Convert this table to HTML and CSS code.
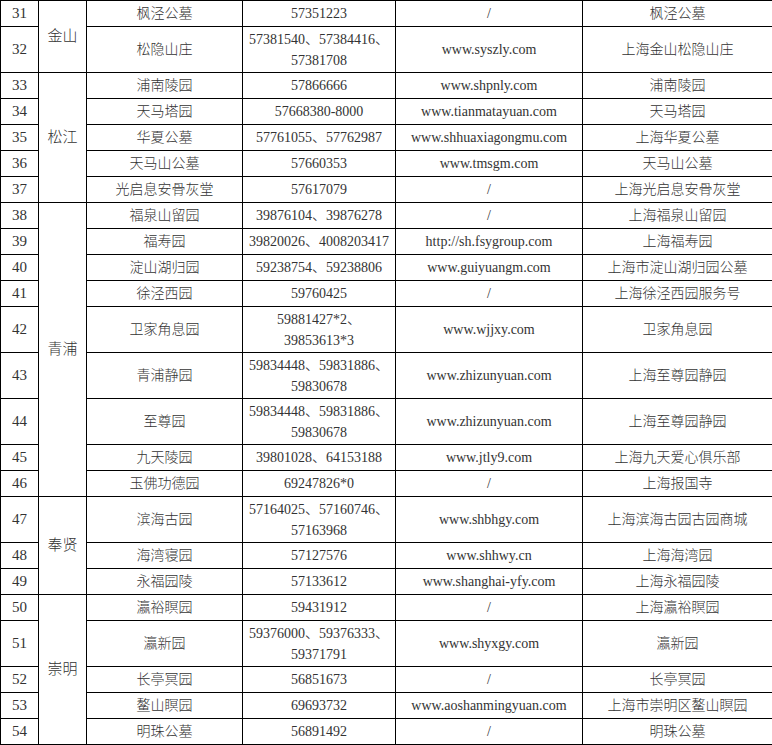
FILE: index.html
```html
<!DOCTYPE html>
<html lang="zh-CN">
<head>
<meta charset="utf-8">
<title>墓园名录</title>
<link rel="stylesheet" href="styles.css">
</head>
<body>
<table class="list">
<colgroup>
<col class="c-no"><col class="c-dist"><col class="c-name"><col class="c-tel"><col class="c-web"><col class="c-wx">
</colgroup>
<tbody>
<tr><td class="no">31</td><td class="dist" rowspan="2">金山</td><td>枫泾公墓</td><td>57351223</td><td>/</td><td>枫泾公墓</td></tr>
<tr class="tall"><td class="no">32</td><td>松隐山庄</td><td>57381540、57384416、<br>57381708</td><td>www.syszly.com</td><td>上海金山松隐山庄</td></tr>
<tr><td class="no">33</td><td class="dist" rowspan="5">松江</td><td>浦南陵园</td><td>57866666</td><td>www.shpnly.com</td><td>浦南陵园</td></tr>
<tr><td class="no">34</td><td>天马塔园</td><td>57668380-8000</td><td>www.tianmatayuan.com</td><td>天马塔园</td></tr>
<tr><td class="no">35</td><td>华夏公墓</td><td>57761055、57762987</td><td>www.shhuaxiagongmu.com</td><td>上海华夏公墓</td></tr>
<tr><td class="no">36</td><td>天马山公墓</td><td>57660353</td><td>www.tmsgm.com</td><td>天马山公墓</td></tr>
<tr><td class="no">37</td><td>光启息安骨灰堂</td><td>57617079</td><td>/</td><td>上海光启息安骨灰堂</td></tr>
<tr><td class="no">38</td><td class="dist" rowspan="9">青浦</td><td>福泉山留园</td><td>39876104、39876278</td><td>/</td><td>上海福泉山留园</td></tr>
<tr><td class="no">39</td><td>福寿园</td><td>39820026、4008203417</td><td>http://sh.fsygroup.com</td><td>上海福寿园</td></tr>
<tr><td class="no">40</td><td>淀山湖归园</td><td>59238754、59238806</td><td>www.guiyuangm.com</td><td>上海市淀山湖归园公墓</td></tr>
<tr><td class="no">41</td><td>徐泾西园</td><td>59760425</td><td>/</td><td>上海徐泾西园服务号</td></tr>
<tr class="tall"><td class="no">42</td><td>卫家角息园</td><td>59881427*2、<br>39853613*3</td><td>www.wjjxy.com</td><td>卫家角息园</td></tr>
<tr class="tall"><td class="no">43</td><td>青浦静园</td><td>59834448、59831886、<br>59830678</td><td>www.zhizunyuan.com</td><td>上海至尊园静园</td></tr>
<tr class="tall"><td class="no">44</td><td>至尊园</td><td>59834448、59831886、<br>59830678</td><td>www.zhizunyuan.com</td><td>上海至尊园静园</td></tr>
<tr><td class="no">45</td><td>九天陵园</td><td>39801028、64153188</td><td>www.jtly9.com</td><td>上海九天爱心俱乐部</td></tr>
<tr><td class="no">46</td><td>玉佛功德园</td><td>69247826*0</td><td>/</td><td>上海报国寺</td></tr>
<tr class="tall"><td class="no">47</td><td class="dist" rowspan="3">奉贤</td><td>滨海古园</td><td>57164025、57160746、<br>57163968</td><td>www.shbhgy.com</td><td>上海滨海古园古园商城</td></tr>
<tr><td class="no">48</td><td>海湾寝园</td><td>57127576</td><td>www.shhwy.cn</td><td>上海海湾园</td></tr>
<tr><td class="no">49</td><td>永福园陵</td><td>57133612</td><td>www.shanghai-yfy.com</td><td>上海永福园陵</td></tr>
<tr><td class="no">50</td><td class="dist" rowspan="5">崇明</td><td>瀛裕瞑园</td><td>59431912</td><td>/</td><td>上海瀛裕瞑园</td></tr>
<tr class="tall"><td class="no">51</td><td>瀛新园</td><td>59376000、59376333、<br>59371791</td><td>www.shyxgy.com</td><td>瀛新园</td></tr>
<tr><td class="no">52</td><td>长亭冥园</td><td>56851673</td><td>/</td><td>长亭冥园</td></tr>
<tr><td class="no">53</td><td>鳌山瞑园</td><td>69693732</td><td>www.aoshanmingyuan.com</td><td>上海市崇明区鳌山瞑园</td></tr>
<tr><td class="no">54</td><td>明珠公墓</td><td>56891492</td><td>/</td><td>明珠公墓</td></tr>
</tbody>
</table>
</body>
</html>
```
FILE: styles.css
```css
html, body {
  margin: 0;
  padding: 0;
  background: #fff;
}
.list {
  border-collapse: collapse;
  table-layout: fixed;
  width: 772px;
  font-family: "Liberation Serif", "Noto Sans CJK SC", serif;
  font-size: 14px;
  font-weight: 300;
  line-height: 21px;
  color: #333;
}
.c-no { width: 38px; }
.c-dist { width: 48px; }
.c-name { width: 156px; }
.c-tel { width: 153px; }
.c-web { width: 187px; }
.c-wx { width: 190px; }
.list td {
  border: 1px solid #000;
  padding: 0;
  height: 25px;
  text-align: center;
  vertical-align: middle;
  white-space: nowrap;
}
.list tr.tall td {
  height: 45px;
}
.list td.no {
  font-size: 15px;
}
.list td.dist {
  font-size: 15px;
}
```
